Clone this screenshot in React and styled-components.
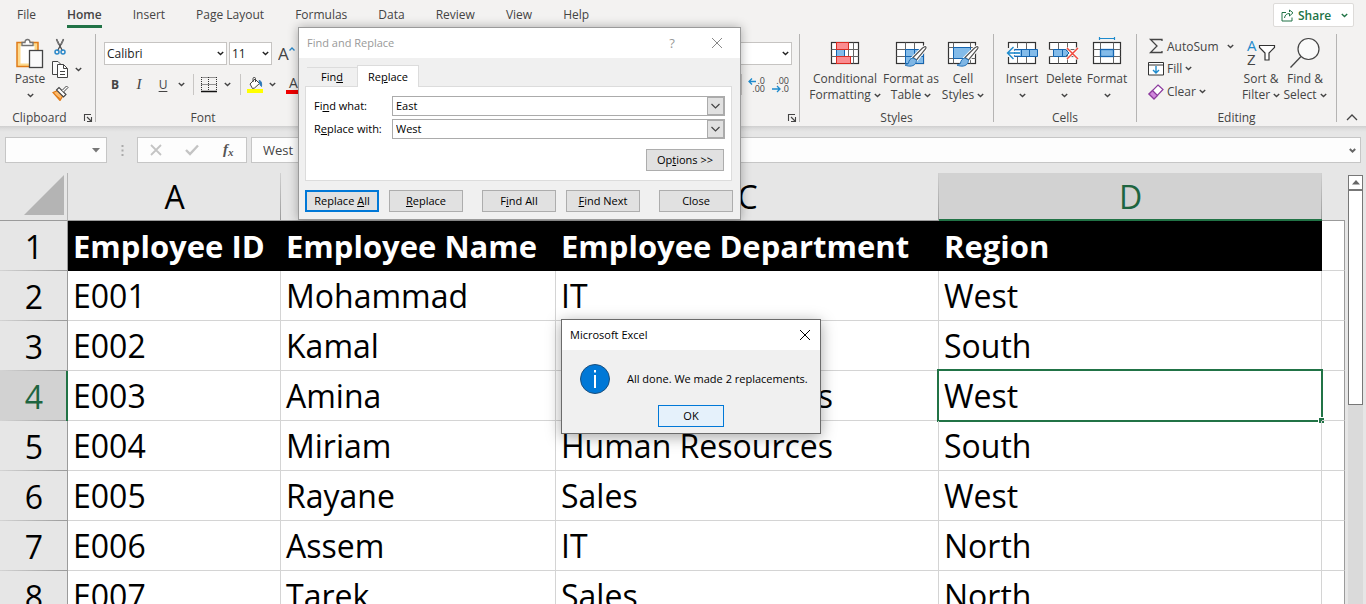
import React from 'react';
import styled, { createGlobalStyle, css } from 'styled-components';

const ui = '"Open Sans", "Noto Sans", sans-serif';
const green = '#217346';
const ink = '#444444';

const Global = createGlobalStyle`
  *, *::before, *::after { box-sizing: border-box; }
  body { margin: 0; font-family: ${ui}; font-size: 12px; color: ${ink}; background: #e6e6e6; }
  button, input { font: inherit; color: inherit; margin: 0; }
  button { padding: 0; border: 0; background: none; cursor: default; white-space: nowrap; }
  svg { display: block; flex: none; }
`;

const Workbook = styled.div`
  position: relative;
  display: flex;
  flex-direction: column;
  height: 100vh;
  overflow: hidden;
`;

/* ---------- tabs ---------- */

const TabBar = styled.nav`
  display: flex;
  align-items: flex-start;
  height: 30px;
  padding-left: 17px;
  background: #f3f2f1;
`;

const TabList = styled.div`
  display: flex;
  flex: 1;
  gap: 31px;
`;

const RibbonTab = styled.button`
  height: 28px;
  padding-top: 5px;
  font-size: 12px;
  line-height: 20px;
  border-bottom: 3px solid ${(p) => (p.$active ? green : 'transparent')};
  font-weight: ${(p) => (p.$active ? 600 : 400)};
`;

const ShareButton = styled.button`
  display: flex;
  align-items: center;
  gap: 4px;
  width: 81px;
  height: 24px;
  margin: 3px 12px 0 0;
  padding: 0 5px 0 7px;
  font-size: 12px;
  font-weight: 600;
  color: ${green};
  background: #fff;
  border: 1px solid #dddbd9;
  border-radius: 2px;

  span { flex: 1; text-align: left; }
`;

/* ---------- ribbon ---------- */

const Ribbon = styled.div`
  display: flex;
  height: 96px;
  background: #f3f2f1;
`;

const Group = styled.section`
  display: flex;
  flex-direction: column;
  flex: ${(p) => (p.$grow ? '1 1 0' : `0 0 ${p.$width}px`)};
  min-width: 0;
`;

const GroupBody = styled.div`
  display: flex;
  flex: 1;
  padding: ${(p) => p.$pad || '4px 0 0'};
`;

const GroupFooter = styled.div`
  position: relative;
  display: flex;
  flex: none;
  justify-content: center;
  align-items: center;
  height: 17px;
  line-height: 17px;
  padding-right: ${(p) => (p.$launcher ? '16px' : 0)};
`;

const Launcher = styled.button`
  position: absolute;
  right: 2px;
  bottom: 3px;
`;

const GroupDivider = styled.div`
  flex: none;
  width: 1px;
  height: 88px;
  margin-top: 4px;
  background: #b5b4b3;
`;

const BigButton = styled.button`
  display: flex;
  flex-direction: column;
  align-items: center;
  justify-content: flex-start;
  width: ${(p) => p.$width}px;
  line-height: 16px;
`;

const BigIcon = styled.span`
  display: flex;
  align-items: center;
  justify-content: center;
  height: 36px;
`;

const LabelLine = styled.span`
  display: flex;
  align-items: center;
  justify-content: center;
  gap: 3px;
  height: 16px;
`;

const Stack = styled.div`
  display: flex;
  flex-direction: column;
  flex: ${(p) => (p.$width ? `0 0 ${p.$width}px` : '1 1 0')};
`;

const SmallButton = styled.button`
  display: flex;
  align-items: center;
  gap: ${(p) => p.$gap || 3}px;
  height: ${(p) => p.$height || 23}px;
  ${(p) => p.$width && css`
    width: ${p.$width}px;
    span { flex: 1; text-align: left; }
  `}
`;

const ToolRow = styled.div`
  display: flex;
  align-items: center;
  justify-content: ${(p) => (p.$end ? 'flex-end' : 'flex-start')};
  height: 31px;
  gap: ${(p) => p.$gap || 0}px;
  padding-right: ${(p) => p.$inset || 0}px;
`;

const FormatButton = styled.button`
  display: flex;
  align-items: center;
  justify-content: center;
  width: ${(p) => p.$width || 24}px;
  height: 22px;
  font-size: 12px;
  ${(p) => p.$bold && css`font-weight: 700;`}
  ${(p) => p.$italic && css`font-family: "Liberation Serif", serif; font-style: italic; font-size: 15px;`}
  ${(p) => p.$underline && css`text-decoration: underline; text-underline-offset: 2px;`}
`;

const ToolDivider = styled.div`
  flex: none;
  width: 1px;
  height: 21px;
  background: #c8c6c4;
`;

const ComboBox = styled.div`
  display: flex;
  align-items: center;
  flex: none;
  width: ${(p) => p.$width}px;
  height: 23px;
  padding: 0 2px;
  color: #222;
  background: #fff;
  border: 1px solid #c6c4c2;

  input {
    flex: 1;
    min-width: 0;
    width: 0;
    padding: 0;
    border: 0;
    outline: 0;
    background: none;
    font-size: 12px;
  }
`;

/* ---------- formula bar ---------- */

const FormulaBar = styled.div`
  display: flex;
  align-items: flex-start;
  flex: none;
  height: 47px;
  padding: 11px 5px 0;
  background: linear-gradient(#cfcfcf, #dedede 3px, #e6e6e6 6px);
`;

const BarBox = styled.div`
  display: flex;
  align-items: center;
  flex: ${(p) => (p.$width ? `0 0 ${p.$width}px` : '1 1 0')};
  height: 26px;
  padding: ${(p) => p.$pad || '0 6px'};
  justify-content: ${(p) => p.$justify || 'flex-start'};
  background: #fdfdfd;
  border: 1px solid #c6c6c6;

  input {
    flex: 1;
    width: 0;
    padding: 0;
    border: 0;
    outline: 0;
    background: none;
    font-size: 13px;
  }
`;

const Grip = styled.div`
  flex: 0 0 30px;
  display: flex;
  justify-content: center;
  padding-top: 8px;
`;

const BarGap = styled.div`
  flex: 0 0 4px;
`;

/* ---------- sheet ---------- */

const SheetArea = styled.div`
  display: flex;
  flex: 1;
  min-height: 0;
  overflow: hidden;
`;

const Sheet = styled.table`
  flex: 1;
  width: 0;
  align-self: flex-start;
  table-layout: fixed;
  border-collapse: separate;
  border-spacing: 0;
  font-size: 32px;
  line-height: 48px;
  color: #000;
  background: #fff;
`;

const Col = styled.col`
  width: ${(p) => (p.$width ? `${p.$width}px` : 'auto')};
`;

const Corner = styled.th`
  height: 48px;
  padding: 0 3px 3px 0;
  background: #e6e6e6;
  border-right: 1px solid #b5b5b5;
  border-bottom: 1px solid #9b9b9b;

  svg { margin-left: auto; }
`;

const ColumnHead = styled.th`
  height: 48px;
  padding: ${(p) => (p.$active ? '1px' : 0)} 0 0;
  font-weight: 400;
  line-height: 45px;
  border-bottom: ${(p) => (p.$active ? `2px solid ${green}` : '1px solid #9b9b9b')};
  color: ${(p) => (p.$active ? '#1e6540' : '#000')};
  background:
    ${(p) => (p.$last ? '' : 'linear-gradient(#d0d0d0, #9b9b9b) right / 1px 100% no-repeat,')}
    ${(p) => (p.$active ? '#d2d2d2' : '#e6e6e6')};
`;

const RowHead = styled.th`
  height: 50px;
  padding: 2px 0 0 ${(p) => (p.$active ? 2 : 1)}px;
  font-weight: 400;
  border-right: ${(p) => (p.$active ? `2px solid ${green}` : '1px solid #9b9b9b')};
  color: ${(p) => (p.$active ? '#1e6540' : '#000')};
  background:
    linear-gradient(90deg, #d4d4d4, #9b9b9b) bottom / 100% 1px no-repeat,
    ${(p) => (p.$active ? '#d2d2d2' : '#e6e6e6')};
`;

const Cell = styled.td`
  position: relative;
  height: 50px;
  padding: 1px 0 0 5px;
  white-space: nowrap;
  border-right: 1px solid #d4d4d4;
  border-bottom: 1px solid #d4d4d4;
  ${(p) => p.$edge && css`border-right-color: #9b9b9b;`}
  ${(p) => p.$title && css`
    color: #fff;
    background: #000;
    border-color: #000;
    font-weight: 700;
    font-size: 31px;
  `}
`;

const Selection = styled.div`
  position: absolute;
  inset: -2px;
  border: 2px solid ${green};

  &::after {
    content: '';
    position: absolute;
    right: -3px;
    bottom: -3px;
    width: 6px;
    height: 6px;
    background: ${green};
    border: 1px solid #fff;
    border-width: 1px 0 0 1px;
  }
`;

const ScrollPane = styled.div`
  display: flex;
  flex-direction: column;
  flex: 0 0 21px;
  padding: 2px 3px 0 3px;
  background: #e6e6e6;
`;

const ScrollArrow = styled.button`
  display: flex;
  align-items: center;
  justify-content: center;
  height: 15px;
  flex: none;
  background: #fff;
  border: 1px solid #777;
`;

const ScrollTrack = styled.div`
  flex: 1;
  background: #dadada;
`;

const ScrollThumb = styled.div`
  height: 52%;
  background: #fff;
  border: 1px solid #777;
`;

/* ---------- dialogs ---------- */

const Dialog = styled.div`
  position: absolute;
  z-index: 2;
  left: ${(p) => p.$left}px;
  top: ${(p) => p.$top}px;
  width: ${(p) => p.$width}px;
  font-size: 11px;
  line-height: 16px;
  color: #000;
  background: #f0f0f0;
  border: 1px solid ${(p) => p.$edge};
  box-shadow: ${(p) => p.$shadow};
`;

const TitleBar = styled.div`
  display: flex;
  align-items: center;
  height: 30px;
  padding: 0 ${(p) => p.$right}px 0 8px;
  background: #fff;
  color: ${(p) => (p.$muted ? '#999' : '#000')};

  span { flex: 1; }
`;

const HelpButton = styled.button`
  width: 12px;
  margin-right: 33px;
  font-size: 13px;
`;

const DialogTabs = styled.div`
  display: flex;
  align-items: flex-end;
  height: 28px;
  padding: 0 8px;
`;

const DialogTab = styled.button`
  width: ${(p) => (p.$active ? 62 : 50)}px;
  height: ${(p) => (p.$active ? 22 : 19)}px;
  border-top: 1px solid #dcdcdc;
  ${(p) => p.$active && css`
    position: relative;
    background: #fff;
    border: 1px solid #dcdcdc;
    border-bottom: 0;
    margin-bottom: -1px;
  `}
`;

const DialogPanel = styled.div`
  display: flex;
  flex-direction: column;
  gap: 3px;
  height: 95px;
  margin: 0 8px 0 6px;
  padding: 9px 6px 0 8px;
  background: #fff;
  border: 1px solid #dcdcdc;
`;

const Field = styled.div`
  display: flex;
  align-items: center;
  height: 20px;

  label { flex: 0 0 78px; }
`;

const FieldBox = styled.div`
  display: flex;
  flex: 1;
  height: 20px;
  border: 1px solid #ababab;

  input {
    flex: 1;
    width: 0;
    padding: 0 0 0 3px;
    border: 0;
    outline: 0;
  }
`;

const FieldArrow = styled.button`
  display: flex;
  align-items: center;
  justify-content: center;
  width: 17px;
  background: #e1e1e1;
  border: 1px solid #ababab;
`;

const PushButton = styled.button`
  width: ${(p) => p.$width || 74}px;
  height: 22px;
  background: ${(p) => (p.$focus ? '#e5f1fb' : '#e1e1e1')};
  border: ${(p) => (p.$default ? '2px solid #0078d7' : p.$focus ? '1px solid #0078d7' : '1px solid #adadad')};
`;

const OptionsRow = styled.div`
  display: flex;
  justify-content: flex-end;
  padding: 7px 1px 0 0;
`;

const DialogActions = styled.div`
  display: flex;
  gap: 10px;
  padding: 9px 7px 7px 6px;
`;

const ActionGap = styled.span`
  flex: 1;
  margin: 0 -10px;
`;

const AlertBody = styled.div`
  display: flex;
  align-items: center;
  gap: 16px;
  height: 55px;
  padding: 3px 0 0 17px;
  white-space: nowrap;
`;

const AlertActions = styled.div`
  display: flex;
  justify-content: center;
  padding-bottom: 6px;
`;

/* ---------- icons ---------- */

const Svg = ({ w, h, children, ...rest }) => (
  <svg width={w} height={h} viewBox={`0 0 ${w} ${h}`} fill="none" stroke={ink} aria-hidden="true" {...rest}>
    {children}
  </svg>
);

const Chevron = ({ color = ink, width = 1.4 }) => (
  <Svg w={7} h={5} stroke={color} strokeWidth={width}><path d="M0.8 1l2.7 2.6L6.2 1" /></Svg>
);

const PasteIcon = () => (
  <Svg w={30} h={34}>
    <rect x="2" y="6.500" width="21" height="24" fill="#fdd98c" stroke="#e07b17" strokeWidth="1.500" />
    <rect x="5.500" y="10" width="14" height="17.500" fill="#fff" stroke="none" />
    <path d="M7 9.500V6.500h3c0-4 5-4 5 0h3v3z" fill="#fff" stroke="#737373" strokeWidth="1.300" />
    <rect x="14.500" y="14.500" width="13" height="17" fill="#fafafa" strokeWidth="1.300" />
  </Svg>
);

const CutIcon = () => (
  <Svg w={16} h={18}>
    <path d="M4.500 1l6 12M11.500 1L5.500 13" strokeWidth="1.200" />
    <path d="M4.500 1.500L7 7M11.500 1.500L9 7" stroke="#777" strokeWidth="1.600" />
    <circle cx="5" cy="14" r="2" stroke="#2b88c9" strokeWidth="1.500" />
    <circle cx="11" cy="14" r="2" stroke="#2b88c9" strokeWidth="1.500" />
  </Svg>
);

const CopyIcon = () => (
  <Svg w={17} h={18}>
    <path d="M5.500 13.500h-5V.5h5.500L8.500 3" fill="#fafafa" />
    <path d="M5.500 3.500h6l4 4v9h-10z" fill="#fff" />
    <path d="M11.500 3.500v4h4M8 10.500h5M8 13.500h5" />
  </Svg>
);

const PainterIcon = () => (
  <Svg w={17} h={16}>
    <path d="M1 7.500L6 5.500l5 5-3 5z" fill="#fdb96a" stroke="#e07b17" strokeWidth="1.200" />
    <path d="M3.500 10.500l5 3.500" stroke="#e07b17" />
    <path d="M4.500 5L7 2.500l7 7L11.500 12z" fill="#fff" strokeWidth="1.100" />
    <path d="M10 5.500L14.500 1l1.500 1.500L11.500 7" fill="#fff" />
  </Svg>
);

const BordersIcon = () => (
  <Svg w={16} h={16}>
    <path d="M.5 .5h15M.5 7.500h15M.5 0v14M7.500 0v14M15.500 0v14" strokeDasharray="1 1" stroke="#333" />
    <path d="M0 14.500h16" stroke="#111" strokeWidth="1.500" />
  </Svg>
);

const FillColorIcon = () => (
  <Svg w={17} h={16}>
    <path d="M3 7l5-5 4.500 4.500-5 4.500-2 .5z" fill="#fff" />
    <path d="M6 5V1.500c0-1.500 2.500-1.500 2.500 0V5" />
    <path d="M12 3.500c2 0 3 2 2.500 6-1.500-1-2-3-2.500-6z" fill="#2b78b9" stroke="#2b78b9" />
    <rect x="0" y="12" width="16" height="4" fill="#ffff00" stroke="none" />
  </Svg>
);

const FontColorIcon = () => (
  <Svg w={17} h={18}>
    <text x="3" y="12" fontSize="14" fill={ink} stroke="none">A</text>
    <rect x="0" y="14" width="16" height="4" fill="#f00000" stroke="none" />
  </Svg>
);

const GrowFontIcon = () => (
  <Svg w={18} h={18}>
    <text x="0" y="15" fontSize="17" fill={ink} stroke="none">A</text>
    <path d="M11.500 5.500L14 3l2.500 2.500" stroke="#2b88c9" strokeWidth="1.400" />
  </Svg>
);

const DecimalIcon = ({ more }) => (
  <Svg w={18} h={18}>
    {more
      ? <path d="M1 5.500h7M4 2.500l-3 3 3 3" stroke="#1e8bcd" strokeWidth="1.300" />
      : <path d="M0 13h8M5 10l3 3-3 3" stroke="#1e8bcd" strokeWidth="1.300" />}
    <text x="17" y="8" fontSize="9" fill={ink} stroke="none" textAnchor="end">{more ? '.0' : '.00'}</text>
    <text x="17" y="16" fontSize="9" fill={ink} stroke="none" textAnchor="end">{more ? '.00' : '.0'}</text>
  </Svg>
);

const LauncherIcon = () => (
  <Svg w={10} h={10}>
    <path d="M1.500 8V1.500H8M4 4l4 4M8.500 4v4.500H4" strokeWidth="1.100" />
  </Svg>
);

const Lattice = ({ x = 1.5, y = 1.5 }) => (
  <>
    <rect x={x} y={y} width="27" height="21" fill="#fff" stroke="#333" strokeWidth="1.200" />
    <path d={`M${x} ${y + 7}h27M${x} ${y + 14}h27M${x + 9} ${y}v21M${x + 18} ${y}v21`} stroke="#666" />
  </>
);

const Brush = () => (
  <>
    <path d="M30 9.500c1 0 1.500 1 .5 2.500L21.500 23l-3.500-2.500L27.500 11z" fill="#fff" stroke="#fff" strokeWidth="3" />
    <path d="M30 9.500c1 0 1.500 1 .5 2.500L21.500 23l-3.500-2.500L27.500 11z" fill="#fff" stroke="#555" strokeWidth="1.200" />
    <path d="M18 21c-3 .5-4 2.500-4.500 5-1 1.500-2 2-3.500 2 4 2 9.500 1.500 11-2.500.5-1.500.5-2 .5-2.500z" fill="#7fb6e4" stroke="#2272b8" />
  </>
);

const ConditionalIcon = () => (
  <Svg w={30} h={28}>
    <rect x="1.500" y="3.500" width="27" height="21" fill="#fff" stroke="#333" strokeWidth="1.200" />
    <path d="M1.500 10.500h27M1.500 17.500h27M6.500 3.500v21M18.500 3.500v21M23.500 3.500v21" stroke="#666" />
    <rect x="6.500" y="10.500" width="8" height="7" fill="#83bbe9" stroke="#1565b0" />
    <rect x="6.500" y="3.500" width="12" height="7" fill="#fb8c90" stroke="#d92c23" />
    <rect x="6.500" y="17.500" width="14" height="7" fill="#fb8c90" stroke="#d92c23" />
  </Svg>
);

const FormatTableIcon = () => (
  <Svg w={32} h={32}>
    <Lattice y={5.5} />
    <path d="M10.500 12.500h18v14h-18zM10.500 19.500h18M19.500 12.500v14" fill="#83bbe9" stroke="#1565b0" />
    <Brush />
  </Svg>
);

const CellStylesIcon = () => (
  <Svg w={32} h={32}>
    <rect x="1.500" y="5.500" width="27" height="21" fill="#fff" stroke="#333" strokeWidth="1.200" />
    <path d="M1.500 10.500h27M1.500 21.500h27M6.500 5.500v21M23.500 5.500v21" stroke="#666" />
    <rect x="6.500" y="10.500" width="17" height="11" fill="#83bbe9" stroke="#1565b0" />
    <Brush />
  </Svg>
);

const InsertIcon = () => (
  <Svg w={34} h={28}>
    <Lattice x={3.5} y={3.5} />
    <rect x="2" y="9" width="12" height="9" fill="#f3f2f1" stroke="none" />
    <path d="M9.500 10.500h23v7h-23zM16.500 10.500v7M24.500 10.500v7" fill="#83bbe9" stroke="#1565b0" />
    <path d="M15 12.500H6M15 15.500H6" stroke="#fff" strokeWidth="1.500" />
    <path d="M15 14H2.500M8.500 8l-6 6 6 6" stroke="#1e8bcd" strokeWidth="1.400" />
  </Svg>
);

const DeleteIcon = () => (
  <Svg w={32} h={28}>
    <path d="M1.500 10.500v-7h27v7M1.500 17.500v7h27v-5" fill="#fff" stroke="#333" strokeWidth="1.200" />
    <path d="M10.500 3.500v21M19.500 3.500v21M1.500 10.500h27M1.500 17.500h27" stroke="#666" />
    <path d="M5.500 10.500h12l3.500 3.500-3.500 3.500h-12zM14.500 10.500v7" fill="#83bbe9" stroke="#1565b0" />
    <path d="M19 9l11 11M30 9L19 20" stroke="#fff" strokeWidth="3" />
    <path d="M19 9l11 11M30 9L19 20" stroke="#f04a3e" strokeWidth="1.500" />
  </Svg>
);

const FormatCellsIcon = () => (
  <Svg w={30} h={34}>
    <path d="M7.500 2.500h15M7.500 1v3M22.500 1v3" stroke="#1e8bcd" strokeWidth="1.200" />
    <rect x="1.500" y="6.500" width="27" height="21" fill="#fff" stroke="#333" strokeWidth="1.200" />
    <path d="M1.500 13.500h27M1.500 20.500h27M8.500 6.500v21M21.500 6.500v21" stroke="#666" />
    <rect x="8.500" y="13.500" width="13" height="7" fill="#83bbe9" stroke="#1565b0" strokeWidth="1.300" />
  </Svg>
);

const SumIcon = () => (
  <Svg w={16} h={16}><path d="M14 3V1.500H2.500L9 8l-6.500 6.500H14V13" strokeWidth="1.300" /></Svg>
);

const FillIcon = () => (
  <Svg w={16} h={16}>
    <path d="M.5 1.500h15v12.500H.5zM.5 4h15" fill="#fff" stroke="#333" />
    <path d="M8 5v7M5 9l3 3 3-3" stroke="#1e8bcd" strokeWidth="1.400" />
  </Svg>
);

const ClearIcon = () => (
  <Svg w={16} h={16}>
    <path d="M10 1l5 4.500-9 9.500-5-5z" fill="#fff" stroke="#8c3a9e" strokeWidth="1.200" />
    <path d="M4.500 6.500l5 5L6 15l-5-5z" fill="#cf86db" stroke="#8c3a9e" strokeWidth="1.200" />
  </Svg>
);

const SortIcon = () => (
  <Svg w={30} h={30}>
    <text x="1" y="13" fontSize="15" fill="#1e8bcd" stroke="none">A</text>
    <text x="1" y="27" fontSize="15" fill={ink} stroke="none">Z</text>
    <path d="M13.500 7.500h15v2L23 15v7h-4v-7l-5.500-5.500z" fill="#fff" stroke="#333" strokeWidth="1.200" />
  </Svg>
);

const FindIcon = () => (
  <Svg w={30} h={32}>
    <circle cx="18.500" cy="12" r="10.500" fill="#fafafa" strokeWidth="1.200" />
    <path d="M11 19.500L.5 30.500" strokeWidth="1.300" />
  </Svg>
);

const ShareIcon = () => (
  <Svg w={13} h={13} stroke={green}>
    <path d="M5 3.500H1v8.500h10V8.500M3.500 9c.5-3 2-4.500 5-4.500V7L12 3.800 8.500 1v2" />
  </Svg>
);

const CloseIcon = ({ color }) => (
  <Svg w={12} h={12} stroke={color}><path d="M1 1l10 10M11 1L1 11" /></Svg>
);

const InfoIcon = () => (
  <Svg w={32} h={32}>
    <circle cx="16" cy="16" r="14.500" fill="#0078d7" stroke="#1b4f7d" />
    <path d="M16 12v13M16 7v2.500" stroke="#fff" strokeWidth="2" />
  </Svg>
);

/* ---------- data ---------- */

const tabs = ['File', 'Home', 'Insert', 'Page Layout', 'Formulas', 'Data', 'Review', 'View', 'Help'];

const rows = [
  ['Employee ID', 'Employee Name', 'Employee Department', 'Region'],
  ['E001', 'Mohammad', 'IT', 'West'],
  ['E002', 'Kamal', 'Sales', 'South'],
  ['E003', 'Amina', 'Human Resources', 'West'],
  ['E004', 'Miriam', 'Human Resources', 'South'],
  ['E005', 'Rayane', 'Sales', 'West'],
  ['E006', 'Assem', 'IT', 'North'],
  ['E007', 'Tarek', 'Sales', 'North'],
];

const RibbonButton = ({ icon, lines, width, dropBelow }) => (
  <BigButton $width={width}>
    <BigIcon>{icon}</BigIcon>
    {lines.map((line, i) => (
      <LabelLine key={line}>
        {line}
        {!dropBelow && i === lines.length - 1 && <Chevron />}
      </LabelLine>
    ))}
    {dropBelow && <LabelLine><Chevron /></LabelLine>}
  </BigButton>
);

const RibbonCombo = ({ label, value, width }) => (
  <ComboBox $width={width}>
    <input aria-label={label} defaultValue={value} />
    <button aria-label={`${label} list`}><Chevron color="#222" /></button>
  </ComboBox>
);

const DialogField = ({ id, label, value }) => (
  <Field>
    <label htmlFor={id}>{label}</label>
    <FieldBox>
      <input id={id} defaultValue={value} />
      <FieldArrow aria-label="History">
        <Svg w={11} h={7} stroke="#444"><path d="M1.500 1l4 4 4-4" strokeWidth="1.200" /></Svg>
      </FieldArrow>
    </FieldBox>
  </Field>
);

export default function App() {
  return (
    <Workbook>
      <Global />

      <TabBar>
        <TabList>
          {tabs.map((tab) => (
            <RibbonTab key={tab} $active={tab === 'Home'}>{tab}</RibbonTab>
          ))}
        </TabList>
        <ShareButton><ShareIcon /><span>Share</span><Chevron color={green} /></ShareButton>
      </TabBar>

      <Ribbon>
        <Group $width={95}>
          <GroupBody $pad="5px 0 0 8px">
            <RibbonButton icon={<PasteIcon />} lines={['Paste']} width={44} dropBelow />
            <Stack $width={36}>
              <SmallButton aria-label="Cut"><CutIcon /></SmallButton>
              <SmallButton aria-label="Copy" $gap={6}><CopyIcon /><Chevron /></SmallButton>
              <SmallButton aria-label="Format Painter"><PainterIcon /></SmallButton>
            </Stack>
          </GroupBody>
          <GroupFooter $launcher>Clipboard<Launcher aria-label="Clipboard settings"><LauncherIcon /></Launcher></GroupFooter>
        </Group>
        <GroupDivider />

        <Group $width={214}>
          <GroupBody $pad="8px 0 0 8px">
            <Stack $width={206}>
              <ToolRow $gap={2}>
                <RibbonCombo label="Font name" value="Calibri" width={123} />
                <RibbonCombo label="Font size" value="11" width={43} />
                <FormatButton aria-label="Increase font size" $width={26}><GrowFontIcon /></FormatButton>
              </ToolRow>
              <ToolRow>
                <FormatButton $bold $width={22}>B</FormatButton>
                <FormatButton $italic $width={26}>I</FormatButton>
                <FormatButton $underline $width={22}>U</FormatButton>
                <FormatButton aria-label="Underline style" $width={14}><Chevron /></FormatButton>
                <FormatButton aria-hidden="true" as="span" $width={10}><ToolDivider /></FormatButton>
                <FormatButton aria-label="Borders" $width={22}><BordersIcon /></FormatButton>
                <FormatButton aria-label="Border style" $width={14}><Chevron /></FormatButton>
                <FormatButton aria-hidden="true" as="span" $width={12}><ToolDivider /></FormatButton>
                <FormatButton aria-label="Fill color" $width={18}><FillColorIcon /></FormatButton>
                <FormatButton aria-label="Fill color list" $width={16}><Chevron /></FormatButton>
                <FormatButton aria-label="Font color" $width={28}><FontColorIcon /></FormatButton>
              </ToolRow>
            </Stack>
          </GroupBody>
          <GroupFooter>Font</GroupFooter>
        </Group>

        <Group $grow>
          <GroupBody $pad="8px 7px 0 0">
            <Stack>
              <ToolRow $end><RibbonCombo label="Number format" value="" width={123} /></ToolRow>
              <ToolRow $end $gap={6} $inset={2}>
                <ToolDivider />
                <FormatButton aria-label="Increase decimal" $width={18}><DecimalIcon more /></FormatButton>
                <FormatButton aria-label="Decrease decimal" $width={18}><DecimalIcon /></FormatButton>
              </ToolRow>
            </Stack>
          </GroupBody>
          <GroupFooter><Launcher aria-label="Number settings"><LauncherIcon /></Launcher></GroupFooter>
        </Group>
        <GroupDivider />

        <Group $width={193}>
          <GroupBody $pad="5px 0 0 7px">
            <RibbonButton icon={<ConditionalIcon />} lines={['Conditional', 'Formatting']} width={76} />
            <RibbonButton icon={<FormatTableIcon />} lines={['Format as', 'Table']} width={56} />
            <RibbonButton icon={<CellStylesIcon />} lines={['Cell', 'Styles']} width={48} />
          </GroupBody>
          <GroupFooter>Styles</GroupFooter>
        </Group>
        <GroupDivider />

        <Group $width={142}>
          <GroupBody $pad="5px 0 0 7px">
            <RibbonButton icon={<InsertIcon />} lines={['Insert']} width={42} dropBelow />
            <RibbonButton icon={<DeleteIcon />} lines={['Delete']} width={42} dropBelow />
            <RibbonButton icon={<FormatCellsIcon />} lines={['Format']} width={44} dropBelow />
          </GroupBody>
          <GroupFooter>Cells</GroupFooter>
        </Group>
        <GroupDivider />

        <Group $width={199}>
          <GroupBody $pad="5px 0 0 11px">
            <Stack $width={91}>
              <SmallButton $width={86} $height={22}><SumIcon /><span>AutoSum</span><Chevron /></SmallButton>
              <SmallButton><FillIcon /><span>Fill</span><Chevron /></SmallButton>
              <SmallButton><ClearIcon /><span>Clear</span><Chevron /></SmallButton>
            </Stack>
            <RibbonButton icon={<SortIcon />} lines={['Sort &', 'Filter']} width={44} />
            <RibbonButton icon={<FindIcon />} lines={['Find &', 'Select']} width={44} />
          </GroupBody>
          <GroupFooter>Editing</GroupFooter>
        </Group>
        <GroupDivider />

        <Group $width={29}>
          <GroupBody />
          <GroupFooter>
            <button aria-label="Collapse the ribbon">
              <Svg w={12} h={7}><path d="M1 6l5-5 5 5" strokeWidth="1.300" /></Svg>
            </button>
          </GroupFooter>
        </Group>
      </Ribbon>

      <FormulaBar>
        <BarBox $width={102}>
          <input aria-label="Name box" defaultValue="" />
          <button aria-label="Names">
            <Svg w={8} h={5} stroke="none"><path d="M0 0h8L4 4.500z" fill="#777" /></Svg>
          </button>
        </BarBox>
        <Grip>
          <Svg w={3} h={11} stroke="#aaa" strokeWidth="2"><path d="M1.500 0v2M1.500 4.500v2M1.500 9v2" /></Svg>
        </Grip>
        <BarBox $width={110} $justify="space-between" $pad="0 11px 0 12px">
          <button aria-label="Cancel">
            <Svg w={12} h={12} stroke="#c4c4c4" strokeWidth="1.800"><path d="M1 1l10 10M11 1L1 11" /></Svg>
          </button>
          <button aria-label="Enter">
            <Svg w={14} h={12} stroke="#c4c4c4" strokeWidth="2.400"><path d="M1 6l4 4L13 1.500" /></Svg>
          </button>
          <button aria-label="Insert function">
            <Svg w={14} h={17} stroke="none">
              <text x="2" y="12" fontSize="15" fontStyle="italic" fontWeight="700" fontFamily="Liberation Serif, serif" fill="#555">f</text>
              <text x="7" y="14" fontSize="11" fontStyle="italic" fontWeight="700" fontFamily="Liberation Serif, serif" fill="#555">x</text>
            </Svg>
          </button>
        </BarBox>
        <BarGap />
        <BarBox $pad="0 4px 0 11px">
          <input aria-label="Formula" defaultValue="West" />
          <button aria-label="Expand formula bar"><Chevron color="#666" width={2} /></button>
        </BarBox>
      </FormulaBar>

      <SheetArea>
        <Sheet>
          <colgroup>
            <Col $width={68} />
            <Col $width={213} />
            <Col $width={275} />
            <Col $width={383} />
            <Col $width={383} />
            <Col />
          </colgroup>
          <thead>
            <tr>
              <Corner aria-label="Select all">
                <Svg w={40} h={40} stroke="none"><path d="M40 0v40H0z" fill="#b4b4b4" /></Svg>
              </Corner>
              {['A', 'B', 'C', 'D'].map((name) => (
                <ColumnHead key={name} scope="col" $active={name === 'D'}>{name}</ColumnHead>
              ))}
              <ColumnHead $last />
            </tr>
          </thead>
          <tbody>
            {rows.map((row, r) => (
              <tr key={row[0]}>
                <RowHead scope="row" $active={r === 3}>{r + 1}</RowHead>
                {row.map((value, c) => (
                  <Cell key={c} $title={r === 0}>
                    {value}
                    {r === 3 && c === 3 && <Selection />}
                  </Cell>
                ))}
                <Cell $edge />
              </tr>
            ))}
          </tbody>
        </Sheet>
        <ScrollPane>
          <ScrollArrow aria-label="Scroll up">
            <Svg w={8} h={5} stroke="none"><path d="M0 4.500h8L4 0z" fill="#666" /></Svg>
          </ScrollArrow>
          <ScrollTrack><ScrollThumb /></ScrollTrack>
        </ScrollPane>
      </SheetArea>

      <Dialog role="dialog" aria-label="Find and Replace" $left={298} $top={27} $width={443} $edge="#9a9a9a" $shadow="0 0 10px rgba(0, 0, 0, 0.3)">
        <TitleBar $muted $right={17}>
          <span>Find and Replace</span>
          <HelpButton>?</HelpButton>
          <button aria-label="Close dialog"><CloseIcon color="#888" /></button>
        </TitleBar>
        <DialogTabs>
          <DialogTab>Fin<u>d</u></DialogTab>
          <DialogTab $active>Re<u>p</u>lace</DialogTab>
        </DialogTabs>
        <DialogPanel>
          <DialogField id="find-what" label={<>Fi<u>n</u>d what:</>} value="East" />
          <DialogField id="replace-with" label={<>R<u>e</u>place with:</>} value="West" />
          <OptionsRow><PushButton $width={78}>Op<u>t</u>ions &gt;&gt;</PushButton></OptionsRow>
        </DialogPanel>
        <DialogActions>
          <PushButton $default>Replace <u>A</u>ll</PushButton>
          <PushButton><u>R</u>eplace</PushButton>
          <ActionGap />
          <PushButton>F<u>i</u>nd All</PushButton>
          <PushButton><u>F</u>ind Next</PushButton>
          <ActionGap />
          <PushButton>Close</PushButton>
        </DialogActions>
      </Dialog>

      <Dialog role="alertdialog" aria-label="Microsoft Excel" $left={561} $top={319} $width={260} $edge="#6b6b6b" $shadow="0 3px 14px rgba(0, 0, 0, 0.35)">
        <TitleBar $right={9}>
          <span>Microsoft Excel</span>
          <button aria-label="Close message"><CloseIcon color="#000" /></button>
        </TitleBar>
        <AlertBody><InfoIcon />All done. We made 2 replacements.</AlertBody>
        <AlertActions><PushButton $width={66} $focus>OK</PushButton></AlertActions>
      </Dialog>
    </Workbook>
  );
}
